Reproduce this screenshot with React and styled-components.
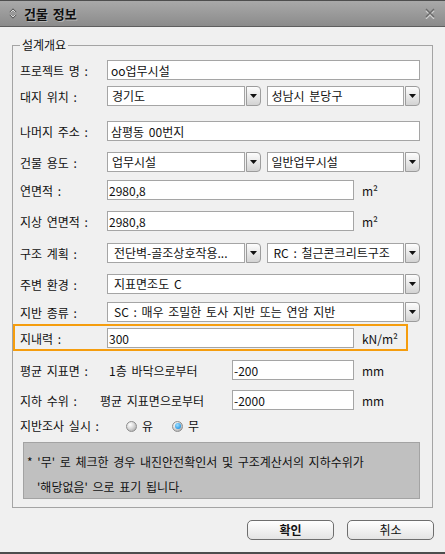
import React from 'react';
import styled, { createGlobalStyle } from 'styled-components';

const Global = createGlobalStyle`
  html, body { margin: 0; padding: 0; background: #f0f0f0; }
  body {
    font-family: "Noto Sans CJK KR", "Noto Sans", sans-serif;
    font-size: 12px;
    color: #111;
    word-spacing: 2px;
  }
  * { box-sizing: border-box; }
`;

const Window = styled.div`
  width: 445px;
  height: 554px;
  background: #f0f0f0;
  border-bottom: 2px solid #4d4d4d;
  display: flex;
  flex-direction: column;
`;

const TitleBar = styled.div`
  height: 27px;
  flex-shrink: 0;
  display: flex;
  align-items: center;
  padding: 0 10px 0 9px;
  background: linear-gradient(#a9a9a9, #8b8b8b);
  border-top: 1px solid #4e4e4e;
  border-bottom: 1px solid #5e5e5e;
`;

const Title = styled.span`
  flex: 1;
  margin-left: 7px;
  font-size: 13px;
  font-weight: bold;
  color: #111;
  text-shadow: 1px 1px 0 rgba(255, 255, 255, 0.35);
`;

const Content = styled.div`
  padding: 10px 12px 0 12px;
`;

const Fieldset = styled.fieldset`
  margin: 0;
  min-width: 0;
  width: 421px;
  padding: 7px 12px 8px 7px;
  border: 1px solid #a4a4a4;
`;

const Legend = styled.legend`
  padding: 0 2px;
  font-size: 12px;
  line-height: 16px;
`;

const Row = styled.div`
  display: flex;
  align-items: center;
  height: 20px;
  margin-top: ${(p) => p.$mt || 0}px;
`;

const HighlightRow = styled(Row)`
  height: 27px;
  width: 395px;
  margin-left: -7px;
  padding: 2px 0 1px 5px;
  border: 2px solid #f59d0e;
`;

const Label = styled.span`
  width: ${(p) => p.$w ?? 87}px;
  flex-shrink: 0;
  white-space: nowrap;
`;

const MidText = styled.span`
  width: ${(p) => p.$w}px;
  flex-shrink: 0;
  padding-left: ${(p) => p.$pl || 0}px;
  white-space: nowrap;
`;

const TextInput = styled.input`
  flex: ${(p) => (p.$w ? 'none' : 1)};
  width: ${(p) => (p.$w ? `${p.$w}px` : 'auto')};
  min-width: 0;
  height: 20px;
  margin: 0;
  padding: 0 ${(p) => p.$pad ?? 3}px;
  border: 1px solid #a5a5a5;
  background: #fff;
  font: inherit;
  word-spacing: inherit;
  color: #111;
  outline: none;
`;

const Unit = styled.span`
  margin-left: 8px;
  white-space: nowrap;
`;

const SelectPair = styled.div`
  display: flex;
  flex: 1;
  min-width: 0;
  gap: 6px;
`;

const SelectBox = styled.div`
  display: flex;
  flex: 1;
  min-width: 0;
  height: 20px;
  gap: 1px;
`;

const SelectField = styled.div`
  flex: 1;
  min-width: 0;
  border: 1px solid #a5a5a5;
  background: #fff;
  padding: 0 ${(p) => p.$pad ?? 4}px;
  line-height: 18px;
  white-space: nowrap;
  overflow: hidden;
`;

const ArrowButton = styled.div`
  width: 15px;
  flex-shrink: 0;
  border: 1px solid #9c9c9c;
  border-radius: 0 4px 4px 0;
  background: linear-gradient(#fdfdfd, #d3d3d3);
  display: flex;
  align-items: center;
  justify-content: center;
`;

const RadioGroup = styled.div`
  display: flex;
  align-items: center;
  gap: 19px;
`;

const RadioOption = styled.label`
  display: flex;
  align-items: center;
  gap: 5px;
`;

const RadioDot = styled.span`
  width: 11px;
  height: 11px;
  border-radius: 50%;
  border: 1px solid #8e8e8e;
  background: radial-gradient(circle at 35% 30%, #ffffff 0%, #d9d9d9 45%, #9d9d9d 100%);
  display: flex;
  align-items: center;
  justify-content: center;
  margin-top: 2px;

  &::after {
    content: '';
    display: ${(p) => (p.$checked ? 'block' : 'none')};
    width: 6px;
    height: 6px;
    border-radius: 50%;
    background: radial-gradient(circle at 40% 35%, #9fe0ff 0%, #2f9be6 70%, #1c6fb8 100%);
  }
`;

const NoteBox = styled.div`
  margin-top: 7px;
  margin-left: 3px;
  height: 57px;
  border: 1px solid #a3a3a3;
  background: #c0c0c0;
  padding: 6px 0 0 3px;
  line-height: 25px;
`;

const NoteLine = styled.div`
  padding-left: ${(p) => p.$indent || 0}px;
  white-space: nowrap;
`;

const ButtonBar = styled.div`
  display: flex;
  justify-content: flex-end;
  gap: 13px;
  margin-top: 12px;
  padding-right: 11px;
`;

const Button = styled.button`
  width: 87px;
  height: 20px;
  margin: 0;
  padding: 0;
  border: 1px solid #6e6e6e;
  border-radius: 5px;
  background: linear-gradient(#ffffff, #e4e4e4);
  font: inherit;
  font-weight: ${(p) => (p.$primary ? 'bold' : 'normal')};
  color: #111;
  line-height: 18px;
`;

const Arrow = () => (
  <svg width="7" height="4" viewBox="0 0 7 4">
    <path d="M0 0 H7 L3.5 4 Z" fill="#111" />
  </svg>
);

const Select = ({ value, pad }) => (
  <SelectBox>
    <SelectField $pad={pad}>{value}</SelectField>
    <ArrowButton>
      <Arrow />
    </ArrowButton>
  </SelectBox>
);

const TitleIcon = () => (
  <svg width="8" height="11" viewBox="0 0 8 11">
    <path d="M1 4.5 L4 1.5 L7 4.5" fill="none" stroke="#5e5e5e" strokeWidth="1.6" />
    <path d="M1 6.5 L4 9.5 L7 6.5" fill="none" stroke="#5e5e5e" strokeWidth="1.6" />
    <path d="M1.5 4.5 L4 2 L6.5 4.5" fill="none" stroke="#e6e6e6" strokeWidth="0.9" />
    <path d="M1.5 6.5 L4 9 L6.5 6.5" fill="none" stroke="#e6e6e6" strokeWidth="0.9" />
  </svg>
);

const CloseIcon = () => (
  <svg width="10" height="11" viewBox="0 0 10 11">
    <path d="M1 2 L9 10 M9 2 L1 10" stroke="#d0d0d0" strokeWidth="1.4" transform="translate(0 0.8)" />
    <path d="M1 1 L9 9 M9 1 L1 9" stroke="#6a6a6a" strokeWidth="1.4" />
  </svg>
);

export default function App() {
  return (
    <>
      <Global />
      <Window>
        <TitleBar>
          <TitleIcon />
          <Title>건물 정보</Title>
          <CloseIcon />
        </TitleBar>
        <Content>
          <Fieldset>
            <Legend>설계개요</Legend>

            <Row>
              <Label>프로젝트 명 :</Label>
              <TextInput readOnly defaultValue="oo업무시설" />
            </Row>

            <Row $mt={6}>
              <Label>대지 위치 :</Label>
              <SelectPair>
                <Select value="경기도" />
                <Select value="성남시 분당구" />
              </SelectPair>
            </Row>

            <Row $mt={15}>
              <Label>나머지 주소 :</Label>
              <TextInput readOnly defaultValue="삼평동 00번지" />
            </Row>

            <Row $mt={11}>
              <Label>건물 용도 :</Label>
              <SelectPair>
                <Select value="업무시설" />
                <Select value="일반업무시설" />
              </SelectPair>
            </Row>

            <Row $mt={8}>
              <Label>연면적 :</Label>
              <TextInput readOnly $w={247} $pad={1} defaultValue="2980,8" />
              <Unit>m²</Unit>
            </Row>

            <Row $mt={11}>
              <Label>지상 연면적 :</Label>
              <TextInput readOnly $w={247} $pad={1} defaultValue="2980,8" />
              <Unit>m²</Unit>
            </Row>

            <Row $mt={12}>
              <Label>구조 계획 :</Label>
              <SelectPair>
                <Select value="전단벽-골조상호작용..." pad={6} />
                <Select value="RC : 철근콘크리트구조" pad={6} />
              </SelectPair>
            </Row>

            <Row $mt={11}>
              <Label>주변 환경 :</Label>
              <Select value="지표면조도 C" pad={6} />
            </Row>

            <Row $mt={8}>
              <Label>지반 종류 :</Label>
              <Select value="SC : 매우 조밀한 토사 지반 또는 연암 지반" pad={6} />
            </Row>

            <HighlightRow $mt={2}>
              <Label>지내력 :</Label>
              <TextInput readOnly $w={247} $pad={1} defaultValue="300" />
              <Unit>kN/m²</Unit>
            </HighlightRow>

            <Row $mt={9}>
              <Label $w={89}>평균 지표면 :</Label>
              <MidText $w={123}>1층 바닥으로부터</MidText>
              <TextInput readOnly $w={122} $pad={1} defaultValue="-200" />
              <Unit>mm</Unit>
            </Row>

            <Row $mt={10}>
              <Label $w={80}>지하 수위 :</Label>
              <MidText $w={132}>평균 지표면으로부터</MidText>
              <TextInput readOnly $w={122} $pad={1} defaultValue="-2000" />
              <Unit>mm</Unit>
            </Row>

            <Row $mt={5}>
              <Label $w={106}>지반조사 실시 :</Label>
              <RadioGroup>
                <RadioOption>
                  <RadioDot />
                  유
                </RadioOption>
                <RadioOption>
                  <RadioDot $checked />
                  무
                </RadioOption>
              </RadioGroup>
            </Row>

            <NoteBox>
              <NoteLine>* '무' 로 체크한 경우 내진안전확인서 및 구조계산서의 지하수위가</NoteLine>
              <NoteLine $indent={10}>'해당없음' 으로 표기 됩니다.</NoteLine>
            </NoteBox>
          </Fieldset>
        </Content>
        <ButtonBar>
          <Button $primary>확인</Button>
          <Button>취소</Button>
        </ButtonBar>
      </Window>
    </>
  );
}
